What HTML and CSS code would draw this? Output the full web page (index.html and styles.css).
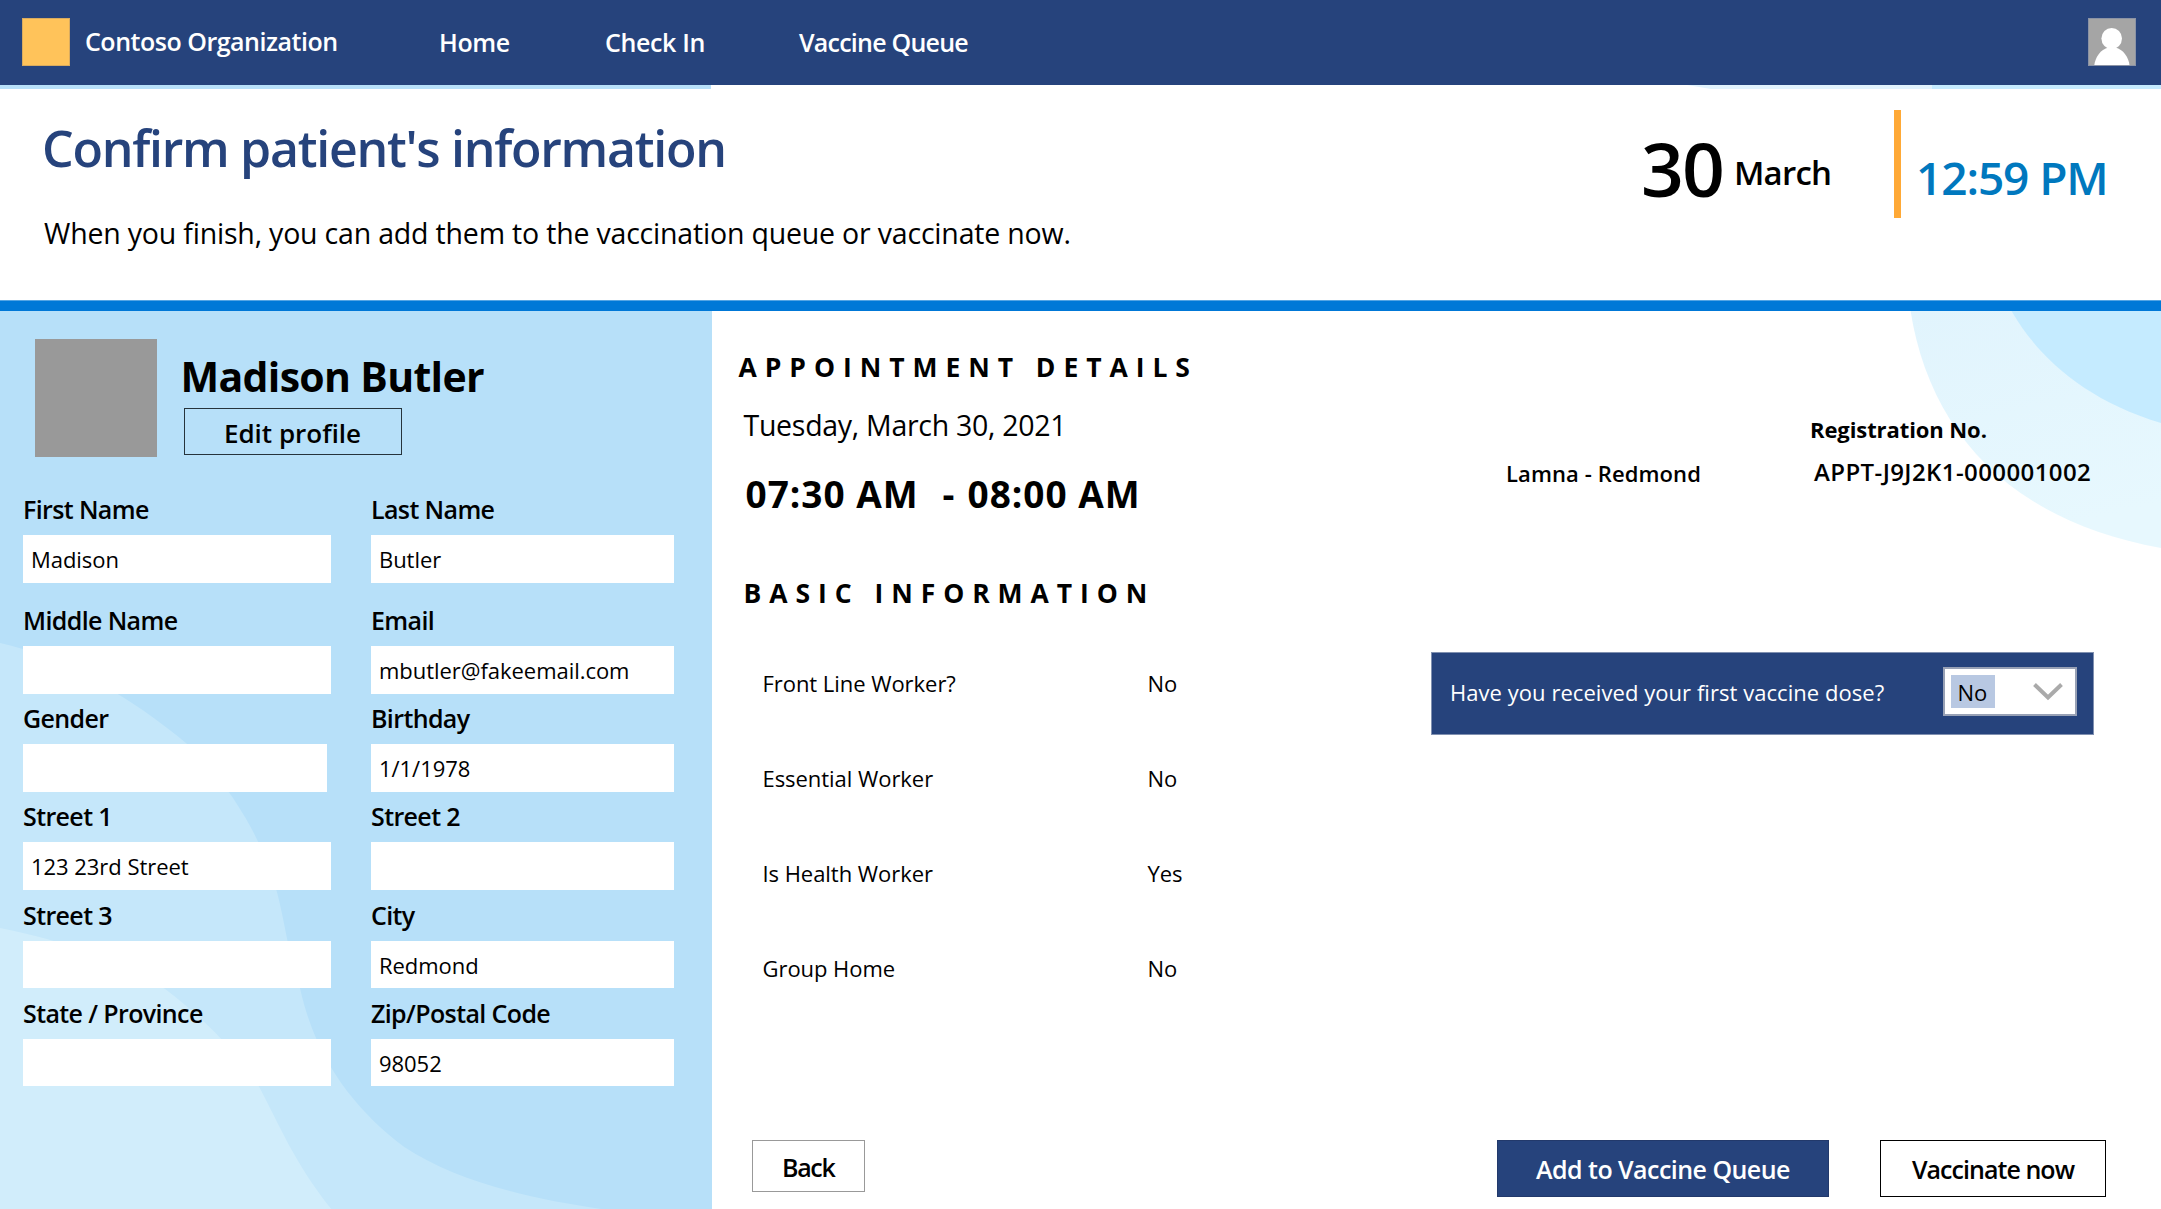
FILE: index.html
```
<!DOCTYPE html>
<html lang="en">
<head>
<meta charset="utf-8">
<title>Confirm patient's information</title>
<link rel="stylesheet" href="styles.css">
</head>
<body>
<header class="topbar">
  <span class="logo"></span>
  <span class="brand">Contoso Organization</span>
  <nav class="nav">
    <a class="nav-link nav-home">Home</a>
    <a class="nav-link nav-check">Check In</a>
    <a class="nav-link nav-queue">Vaccine Queue</a>
  </nav>
  <svg class="avatar" viewBox="0 0 48 48">
    <rect width="48" height="48" fill="#a5a5a5"/>
    <ellipse cx="23.7" cy="20.5" rx="10.3" ry="10.5" fill="#fff"/>
    <path d="M6.3 47.3C7 40 12.5 31 20.5 29.5H27.5C35 31 41 40 41.5 47.3Z" fill="#fff"/>
    <rect x=".5" y=".5" width="47" height="47" fill="none" stroke="#8b93a5"/>
  </svg>
</header>
<div class="strip">
  <span class="strip-left"></span>
  <span class="strip-light"></span>
  <span class="strip-blue"></span>
</div>
<section class="heading">
  <div class="heading-text">
    <h1 class="title">Confirm patient's information</h1>
    <p class="subtitle">When you finish, you can add them to the vaccination queue or vaccinate now.</p>
  </div>
  <div class="clock">
    <span class="day">30</span>
    <span class="month">March</span>
    <span class="divider"></span>
    <span class="time">12:59 PM</span>
  </div>
</section>
<div class="rule"></div>
<main class="main">
  <aside class="panel">
    <svg class="panel-art" viewBox="0 0 711 898" preserveAspectRatio="none">
      <path fill="#c5e7fa" d="M0 332C60 345 130 385 187 433C235 478 268 540 279 590C288 630 290 650 300 678C316 750 356 800 404 836C455 870 530 888 601 898H0Z"/>
      <path fill="#d1edfb" d="M0 617C65 630 120 650 165 678C205 708 240 745 259 776C280 815 293 850 331 898H0Z"/>
    </svg>
    <div class="profile">
      <span class="photo"></span>
      <div class="profile-info">
        <h2 class="name">Madison Butler</h2>
        <button class="edit">Edit profile</button>
      </div>
    </div>
    <div class="form">
      <div class="field"><label class="label">First Name</label><div class="input">Madison</div></div>
      <div class="field"><label class="label">Last Name</label><div class="input">Butler</div></div>
      <div class="field"><label class="label">Middle Name</label><div class="input"></div></div>
      <div class="field"><label class="label">Email</label><div class="input">mbutler@fakeemail.com</div></div>
      <div class="field"><label class="label">Gender</label><div class="input input-narrow"></div></div>
      <div class="field"><label class="label">Birthday</label><div class="input">1/1/1978</div></div>
      <div class="field"><label class="label">Street 1</label><div class="input">123 23rd Street</div></div>
      <div class="field"><label class="label">Street 2</label><div class="input"></div></div>
      <div class="field"><label class="label">Street 3</label><div class="input"></div></div>
      <div class="field"><label class="label">City</label><div class="input">Redmond</div></div>
      <div class="field"><label class="label">State / Province</label><div class="input"></div></div>
      <div class="field"><label class="label">Zip/Postal Code</label><div class="input">98052</div></div>
    </div>
  </aside>
  <section class="content">
    <svg class="content-art" viewBox="0 0 261 240">
      <defs>
        <linearGradient id="ring" x1="0" y1="0" x2=".25" y2="1">
          <stop offset="0" stop-color="#e1f4fd"/>
          <stop offset="1" stop-color="#e7f8fe"/>
        </linearGradient>
      </defs>
      <path fill="url(#ring)" d="M10.6 0C29 117 106 209 261 237V0Z"/>
      <path fill="#c5ebff" d="M111.5 0C137 44 182 88 261 112V0Z"/>
    </svg>
    <div class="columns">
      <div class="details">
        <h3 class="section-title">APPOINTMENT DETAILS</h3>
        <p class="date">Tuesday, March 30, 2021</p>
        <p class="slot"><span class="slot-from">07:30 AM</span><span class="slot-dash">-</span><span>08:00 AM</span></p>
        <h3 class="section-title basic-title">BASIC INFORMATION</h3>
        <dl class="facts">
          <dt>Front Line Worker?</dt><dd>No</dd>
          <dt>Essential Worker</dt><dd>No</dd>
          <dt>Is Health Worker</dt><dd>Yes</dd>
          <dt>Group Home</dt><dd>No</dd>
        </dl>
      </div>
      <div class="side">
        <div class="registration">
          <span class="site">Lamna - Redmond</span>
          <div class="reg">
            <span class="reg-label">Registration No.</span>
            <span class="reg-number">APPT-J9J2K1-000001002</span>
          </div>
        </div>
        <div class="dose">
          <span class="dose-text">Have you received your first vaccine dose?</span>
          <div class="select">
            <span class="select-value">No</span>
            <svg class="chevron" viewBox="0 0 30 18"><path d="M1.5 1.5L15 14.5L28.5 1.5" fill="none" stroke="#aaa" stroke-width="4"/></svg>
          </div>
        </div>
      </div>
    </div>
    <footer class="actions">
      <button class="button back">Back</button>
      <button class="button primary">Add to Vaccine Queue</button>
      <button class="button vaccinate">Vaccinate now</button>
    </footer>
  </section>
</main>
</body>
</html>
```

FILE: styles.css
```
* { box-sizing: border-box; }
body {
  margin: 0;
  width: 2161px;
  height: 1209px;
  overflow: hidden;
  background: #fff;
  color: #000;
  font-family: "Open Sans", "Noto Sans", sans-serif;
  white-space: nowrap;
}
h1, h2, h3, p, dl, dd { margin: 0; }
button { font-family: inherit; color: #000; padding: 0; border-radius: 0; }

/* top navigation */
.topbar {
  display: flex;
  align-items: center;
  height: 85px;
  padding: 0 25px 1px 22px;
  background: #26437c;
  color: #fff;
  font-size: 25px;
  font-weight: 600;
}
.logo { width: 48px; height: 48px; background: #ffc35a; border: 1px solid #d9ab5f; }
.brand { width: 354px; margin-left: 15px; padding-bottom: 2px; letter-spacing: -0.48px; }
.nav { display: grid; grid-template-columns: 166px 194px auto; }
.nav-home, .nav-check { letter-spacing: -0.36px; }
.nav-queue { letter-spacing: -0.77px; }
.avatar { width: 48px; height: 48px; margin-left: auto; }

.strip { display: flex; height: 4px; }
.strip-left { width: 711px; background: #b7e0f9; }
.strip-light { width: 245px; margin-left: 976px; background: #e1f3fd; clip-path: polygon(0 0, 100% 0, 100% 100%, 24px 100%); }
.strip-blue { flex: 1; background: #c5ebff; }

/* page heading */
.heading { display: flex; justify-content: space-between; height: 211px; }
.heading-text { padding: 29px 0 0 42px; }
.title { font-size: 50px; line-height: 60px; font-weight: 600; letter-spacing: -1.27px; color: #26437c; }
.subtitle { margin: 35px 0 0 2px; font-size: 28.5px; line-height: 40px; letter-spacing: -0.19px; }
.clock { display: flex; align-items: flex-start; width: 520px; font-weight: 600; }
.day { width: 93px; margin-top: 34px; font-size: 75px; line-height: 90px; letter-spacing: -1.8px; }
.month { width: 160px; margin-top: 64px; font-size: 33px; line-height: 40px; letter-spacing: -0.8px; }
.divider { width: 7px; height: 108px; margin-top: 21px; background: #ffa936; }
.time { margin: 58px 0 0 15px; font-size: 46px; line-height: 60px; letter-spacing: -1.1px; color: #0078be; }
.rule { height: 11px; background: #0078d7; border-top: 1px solid #55a5e4; }

.main { display: flex; height: 898px; }

/* patient panel */
.panel { position: relative; width: 711.5px; padding: 27px 0 0 23px; background: #b7e0f9; }
.panel-art { position: absolute; inset: 0; width: 100%; height: 100%; }
.profile, .form { position: relative; }
.profile { display: flex; height: 154px; padding-left: 12px; }
.photo { width: 121.5px; height: 118px; margin-top: 1px; background: #999; }
.profile-info { padding: 13px 0 0 24px; }
.name { font-size: 41px; line-height: 50px; font-weight: 700; letter-spacing: -0.68px; }
.edit {
  display: block;
  width: 218px;
  height: 47px;
  margin: 7px 0 0 3px;
  padding-top: 2px;
  border: 1.5px solid #26343c;
  background: none;
  font-size: 26px;
  line-height: 36px;
  font-weight: 600;
}
.form {
  display: grid;
  grid-template-columns: 308px 303px;
  column-gap: 40px;
  grid-template-rows: 111px 98px repeat(4, 98.3px);
}
.label { display: block; margin-bottom: 9px; font-size: 25px; line-height: 34px; font-weight: 600; letter-spacing: -0.62px; }
.input { height: 47.5px; padding-left: 8px; background: #fff; font-size: 22px; line-height: 48px; letter-spacing: -0.04px; }
.input-narrow { width: 304px; }

/* appointment content */
.content { position: relative; flex: 1; }
.content-art { position: absolute; top: 0; right: 0; width: 261px; height: 240px; }
.columns { position: relative; display: flex; height: 829px; }
.details { width: 719.5px; padding: 38px 0 0 27px; }
.section-title { font-size: 26.5px; line-height: 36px; font-weight: 700; letter-spacing: 7.95px; }
.date { margin: 20px 0 0 5px; font-size: 28.5px; line-height: 40px; letter-spacing: -0.28px; }
.slot { display: flex; margin: 24px 0 0 7px; font-size: 37px; line-height: 50px; font-weight: 700; letter-spacing: 0.98px; }
.slot-from { width: 197px; }
.slot-dash { width: 25px; }
.basic-title { margin: 56px 0 0 5px; }
.facts {
  display: grid;
  grid-template-columns: 385px auto;
  row-gap: 65px;
  margin: 57px 0 0 24px;
  font-size: 22px;
  line-height: 30px;
  letter-spacing: -0.05px;
}
.side { flex: 1; padding-top: 103px; }
.registration { display: flex; align-items: flex-end; font-size: 22px; line-height: 30px; }
.site { width: 304px; margin-left: 75px; font-weight: 600; letter-spacing: 0.1px; }
.reg { display: grid; row-gap: 12px; }
.reg-label { font-weight: 700; letter-spacing: -0.09px; }
.reg-number { margin-left: 4px; font-size: 24px; line-height: 32px; font-weight: 600; letter-spacing: 0.4px; }
.dose {
  display: flex;
  justify-content: space-between;
  width: 662.5px;
  height: 83px;
  margin-top: 164px;
  padding: 15px 17px 0 19px;
  background: #26437c;
  box-shadow: inset 0 0 0 1px #8090b0;
  color: #fff;
}
.dose-text { font-size: 22px; line-height: 50px; letter-spacing: 0.05px; }
.select {
  display: flex;
  align-items: center;
  justify-content: space-between;
  width: 134px;
  height: 49px;
  padding: 0 12px 0 6px;
  border: 2px solid #98a1b5;
  background: #fff;
}
.select-value { width: 44px; height: 33px; padding-left: 7px; background: #b8c8e2; color: #000; font-size: 22px; line-height: 34px; }
.chevron { width: 30px; height: 18px; }

/* footer buttons */
.actions { position: relative; display: flex; padding-left: 40px; }
.button { font-size: 25px; line-height: 34px; font-weight: 600; }
.back { width: 113.5px; height: 52px; padding-top: 2px; border: 1.5px solid #999; background: #fff; letter-spacing: -1.3px; }
.primary { width: 332px; height: 57px; margin-left: 632px; padding-top: 1px; border: 1px solid #22396b; background: #26437c; color: #fff; letter-spacing: -0.54px; }
.vaccinate { width: 226px; height: 57px; margin-left: 51px; padding-top: 1px; border: 1.5px solid #000; background: #fff; letter-spacing: -0.95px; }
```
